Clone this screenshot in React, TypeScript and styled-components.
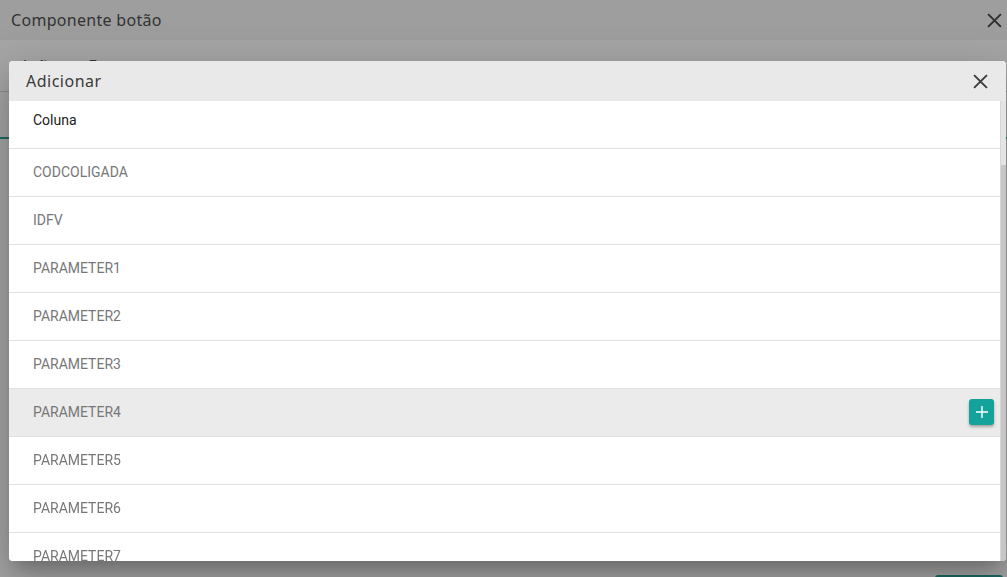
import styled, { createGlobalStyle } from 'styled-components'

const GlobalStyle = createGlobalStyle`
  html, body {
    margin: 0;
    padding: 0;
    height: 100%;
    overflow: hidden;
    background: #a6a6a6;
  }
  * { box-sizing: border-box; }
`

const columns = [
  'CODCOLIGADA',
  'IDFV',
  'PARAMETER1',
  'PARAMETER2',
  'PARAMETER3',
  'PARAMETER4',
  'PARAMETER5',
  'PARAMETER6',
  'PARAMETER7',
]

const CloseIcon = ({ size = 14, color = '#3a3a3a' }: { size?: number; color?: string }) => (
  <svg width={size} height={size} viewBox="0 0 14 14">
    <path d="M1 1L13 13M13 1L1 13" stroke={color} strokeWidth="1.8" fill="none" />
  </svg>
)

const App = () => {
  return (
    <>
      <GlobalStyle />
      <Page>
        <BackHeader>
          <BackTitle>Componente botão</BackTitle>
          <CloseIcon size={15} color="#2e2e2e" />
        </BackHeader>
        <BackTabs>
          <Tab>Ações</Tab>
          <Tab>Eventos</Tab>
        </BackTabs>
        <BackBody>
          <Underline />
          <Footer>
            <BackButton />
          </Footer>
        </BackBody>
      </Page>

      <Overlay>
        <Modal>
          <ModalHeader>
            <ModalTitle>Adicionar</ModalTitle>
            <CloseIcon size={15} color="#3d3d3d" />
          </ModalHeader>
          <ListArea>
            <List>
              <Row head>Coluna</Row>
              {columns.map((c) => (
                <Row key={c} active={c === 'PARAMETER4'}>
                  {c}
                  {c === 'PARAMETER4' && (
                    <AddButton>
                      <svg width="12" height="12" viewBox="0 0 12 12">
                        <path d="M6 0V12M0 6H12" stroke="#fff" strokeWidth="1.4" />
                      </svg>
                    </AddButton>
                  )}
                </Row>
              ))}
            </List>
            <ScrollTrack>
              <ScrollThumb />
            </ScrollTrack>
          </ListArea>
        </Modal>
      </Overlay>
    </>
  )
}

export default App

const Page = styled.div`
  height: 100vh;
  overflow: hidden;
  display: flex;
  flex-direction: column;
  font-family: "Noto Sans", sans-serif;

  & > * {
    flex-shrink: 0;
  }
`

const BackHeader = styled.div`
  height: 40px;
  background: #9e9e9e;
  display: flex;
  align-items: center;
  justify-content: space-between;
  padding: 0 5px 0 11px;
`

const BackTitle = styled.div`
  font-size: 16px;
  color: #333;
  letter-spacing: 0.3px;
`

const BackTabs = styled.div`
  height: 52px;
  display: flex;
  gap: 24px;
  padding: 15px 0 0 20px;
  border-bottom: 1px solid #8c8c8c;
`

const Tab = styled.div`
  font-size: 16px;
  line-height: 22px;
  color: #333;
`

const BackBody = styled.div`
  display: flex;
  flex-direction: column;
  padding-top: 45px;
`

const Underline = styled.div`
  height: 2px;
  background: #1f6a65;
`

const Footer = styled.div`
  display: flex;
  justify-content: flex-end;
  padding: 436px 4px 0 0;
`

const BackButton = styled.div`
  width: 68px;
  height: 36px;
  background: #1c6a64;
  border-radius: 3px;
`

const Overlay = styled.div`
  position: fixed;
  inset: 0;
  display: flex;
  padding: 61px 1px 16px 9px;
`

const Modal = styled.div`
  flex: 1;
  background: #fff;
  border-radius: 4px;
  overflow: hidden;
  display: flex;
  flex-direction: column;
  box-shadow: 0 11px 15px -7px rgba(0, 0, 0, 0.2), 0 24px 38px 3px rgba(0, 0, 0, 0.14),
    0 9px 46px 8px rgba(0, 0, 0, 0.12);
`

const ModalHeader = styled.div`
  height: 40px;
  flex-shrink: 0;
  background: #e9e9e9;
  display: flex;
  align-items: center;
  justify-content: space-between;
  padding: 0 18px 0 17px;
`

const ModalTitle = styled.div`
  font-family: "Noto Sans", sans-serif;
  font-size: 16px;
  color: #3a3a3a;
  letter-spacing: 0.5px;
`

const ListArea = styled.div`
  flex: 1;
  min-height: 0;
  display: flex;
`

const List = styled.div`
  flex: 1;
  overflow: hidden;
`

const ScrollTrack = styled.div`
  width: 6px;
  background: #c6c6c6;
  border-left: 1px solid #d6d6d6;
`

const ScrollThumb = styled.div`
  height: 64px;
  background: #e4e4e4;
`

const Row = styled.div<{ head?: boolean; active?: boolean }>`
  height: 48px;
  display: flex;
  align-items: center;
  justify-content: space-between;
  padding: 0 6px ${(p) => (p.head ? '9px' : '2px')} 24px;
  border-bottom: 1px solid #e0e0e0;
  font-family: Roboto, "Liberation Sans", sans-serif;
  font-size: 14px;
  color: ${(p) => (p.head ? '#212121' : '#777')};
  background: ${(p) => (p.active ? '#ebebeb' : '#fff')};
`

const AddButton = styled.div`
  width: 25px;
  height: 26px;
  border-radius: 3px;
  background: #14a39b;
  display: flex;
  align-items: center;
  justify-content: center;
  box-shadow: 0 2px 3px rgba(0, 0, 0, 0.3);
`
